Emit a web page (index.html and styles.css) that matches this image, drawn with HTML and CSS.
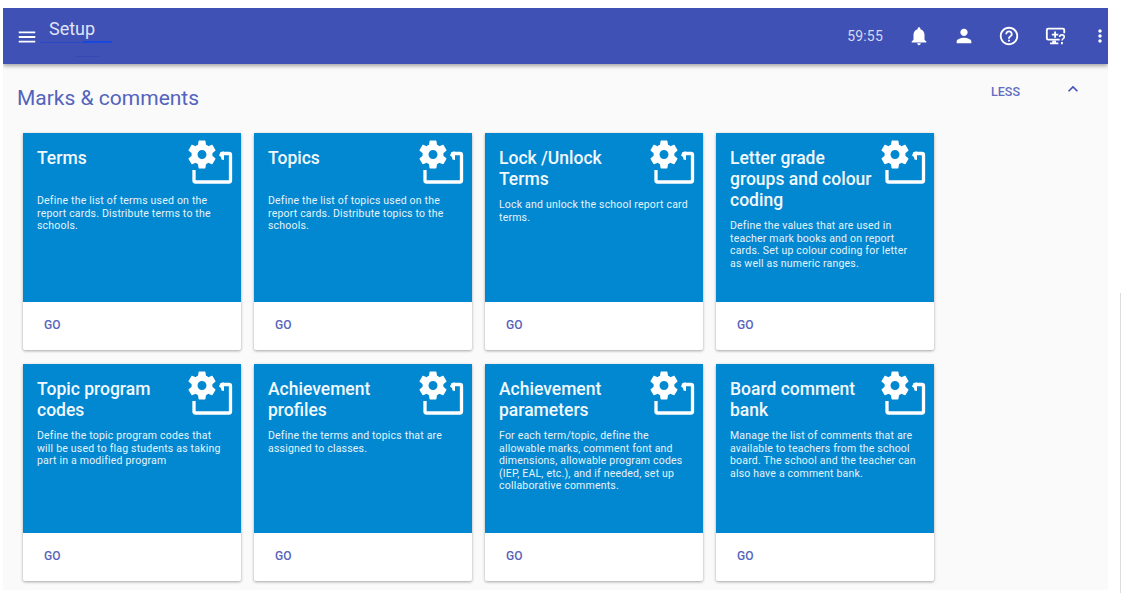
FILE: index.html
```html
<!DOCTYPE html>
<html lang="en">
<head>
<meta charset="utf-8">
<title>Setup</title>
<link rel="stylesheet" href="styles.css">
</head>
<body>
<svg class="defs" width="0" height="0" aria-hidden="true">
  <symbol id="setup" viewBox="0 0 46 46">
    <path fill="#fff" transform="translate(-3.400 -2.900) scale(1.450)" d="M19.140 12.940c.04-.3.06-.61.06-.94 0-.32-.02-.64-.07-.94l2.030-1.580c.18-.14.23-.41.12-.61l-1.920-3.320c-.12-.22-.37-.29-.59-.22l-2.390.96c-.5-.38-1.030-.7-1.620-.94l-.36-2.540c-.04-.24-.24-.41-.48-.41h-3.840c-.24 0-.43.17-.47.41l-.36 2.540c-.59.24-1.130.57-1.620.94l-2.390-.96c-.22-.08-.47 0-.59.22L2.740 8.870c-.12.21-.08.47.12.61l2.030 1.580c-.05.3-.09.63-.09.94s.02.64.07.94l-2.030 1.580c-.18.14-.23.41-.12.61l1.920 3.320c.12.22.37.29.59.22l2.390-.96c.5.38 1.030.7 1.620.94l.36 2.540c.05.24.24.41.48.41h3.840c.24 0 .44-.17.47-.41l.36-2.540c.59-.24 1.130-.56 1.620-.94l2.390.96c.22.08.47 0 .59-.22l1.920-3.320c.12-.22.07-.47-.12-.61l-2.010-1.580zM12 15.100c-1.710 0-3.100-1.390-3.100-3.100s1.390-3.100 3.100-3.100 3.100 1.390 3.100 3.100-1.390 3.100-3.100 3.100z"/>
    <path fill="none" stroke="#fff" stroke-width="3.300" stroke-linejoin="round" d="M6 30v10.500c0 1 .5 1.500 1.500 1.500h33.500c1 0 1.500-.5 1.500-1.500V15c0-1-.5-1.500-1.500-1.500h-7"/>
    <path fill="#fff" d="M36 11.500v8.500l-2.500-.5-.5-2.500-2-1.500 1.500-3.500z"/>
  </symbol>
  <symbol id="menu" viewBox="0 0 24 24"><path fill="currentColor" d="M3 18h18v-2H3zm0-5h18v-2H3zm0-7v2h18V6z"/></symbol>
  <symbol id="bell" viewBox="0 0 24 24"><path fill="currentColor" d="M12 22c1.100 0 2-.9 2-2h-4c0 1.100.9 2 2 2zm6-6v-5c0-3.070-1.630-5.640-4.500-6.320V4c0-.83-.67-1.500-1.500-1.500s-1.500.67-1.500 1.500v.68C7.640 5.360 6 7.920 6 11v5l-2 2v1h16v-1z"/></symbol>
  <symbol id="person" viewBox="0 0 24 24"><path fill="currentColor" d="M12 12c2.210 0 4-1.790 4-4s-1.790-4-4-4-4 1.790-4 4 1.790 4 4 4zm0 2c-2.670 0-8 1.340-8 4v2h16v-2c0-2.660-5.330-4-8-4z"/></symbol>
  <symbol id="help" viewBox="0 0 24 24"><path fill="currentColor" d="M11 18h2v-2h-2zm1-16C6.480 2 2 6.480 2 12s4.480 10 10 10 10-4.480 10-10S17.520 2 12 2zm0 18c-4.410 0-8-3.590-8-8s3.590-8 8-8 8 3.590 8 8-3.590 8-8 8zm0-14c-2.210 0-4 1.790-4 4h2c0-1.100.9-2 2-2s2 .9 2 2c0 2-3 1.750-3 5h2c0-2.250 3-2.500 3-5 0-2.210-1.790-4-4-4z"/></symbol>
  <symbol id="screen" viewBox="0 0 24 24">
    <path fill="none" stroke="currentColor" stroke-width="2" d="M16 16H3.500c-.9 0-1.500-.6-1.500-1.500V5.500C2 4.600 2.600 4 3.500 4h16c.9 0 1.500.6 1.500 1.500V9"/>
    <path fill="currentColor" d="M8 17h4v2h2.500v2h-9v-2H8zM10 7h2v2.500h2.500v2H12V14h-2v-2.500H7.500v-2H10z"/>
    <path fill="none" stroke="currentColor" stroke-width="1.700" d="M16 13c0-3 5-3 5 0 0 2-2.500 2-2.500 4"/>
    <path fill="currentColor" d="M17.500 18.500h2V21h-2z"/>
  </symbol>
  <symbol id="dots" viewBox="0 0 24 24"><path fill="currentColor" d="M12 8c1.100 0 2-.9 2-2s-.9-2-2-2-2 .9-2 2 .9 2 2 2zm0 2c-1.100 0-2 .9-2 2s.9 2 2 2 2-.9 2-2-.9-2-2-2zm0 6c-1.100 0-2 .9-2 2s.9 2 2 2 2-.9 2-2-.9-2-2-2z"/></symbol>
  <symbol id="chev" viewBox="0 0 24 24"><path fill="currentColor" d="M12 8l-6 6 1.410 1.410L12 10.830l4.590 4.580L18 14z"/></symbol>
</svg>
<div class="app">
  <header class="topbar">
    <svg class="ico menu"><use href="#menu"/></svg>
    <span class="title">Setup</span>
    <span class="spacer"></span>
    <span class="time">59:55</span>
    <svg class="ico bell"><use href="#bell"/></svg>
    <svg class="ico person"><use href="#person"/></svg>
    <svg class="ico help"><use href="#help"/></svg>
    <svg class="ico screen"><use href="#screen"/></svg>
    <svg class="ico dots"><use href="#dots"/></svg>
  </header>
  <main class="content">
    <div class="section-head">
      <h1>Marks &amp; comments</h1>
      <span class="less">LESS</span>
      <svg class="chev"><use href="#chev"/></svg>
    </div>
    <div class="grid">
      <article class="card"><div class="card-top"><svg class="setup"><use href="#setup"/></svg><h2>Terms</h2><p>Define the list of terms used on the report cards. Distribute terms to the schools.</p></div><div class="card-foot">GO</div></article>
      <article class="card"><div class="card-top"><svg class="setup"><use href="#setup"/></svg><h2>Topics</h2><p>Define the list of topics used on the report cards. Distribute topics to the schools.</p></div><div class="card-foot">GO</div></article>
      <article class="card"><div class="card-top"><svg class="setup"><use href="#setup"/></svg><h2>Lock /Unlock Terms</h2><p>Lock and unlock the school report card terms.</p></div><div class="card-foot">GO</div></article>
      <article class="card"><div class="card-top"><svg class="setup"><use href="#setup"/></svg><h2>Letter grade groups and colour coding</h2><p>Define the values that are used in teacher mark books and on report cards. Set up colour coding for letter as well as numeric ranges.</p></div><div class="card-foot">GO</div></article>
      <article class="card"><div class="card-top"><svg class="setup"><use href="#setup"/></svg><h2>Topic program codes</h2><p>Define the topic program codes that will be used to flag students as taking part in a modified program</p></div><div class="card-foot">GO</div></article>
      <article class="card"><div class="card-top"><svg class="setup"><use href="#setup"/></svg><h2>Achievement profiles</h2><p>Define the terms and topics that are assigned to classes.</p></div><div class="card-foot">GO</div></article>
      <article class="card"><div class="card-top"><svg class="setup"><use href="#setup"/></svg><h2>Achievement parameters</h2><p>For each term/topic, define the allowable marks, comment font and dimensions, allowable program codes (IEP, EAL, etc.), and if needed, set up collaborative comments.</p></div><div class="card-foot">GO</div></article>
      <article class="card"><div class="card-top"><svg class="setup"><use href="#setup"/></svg><h2>Board comment bank</h2><p>Manage the list of comments that are available to teachers from the school board. The school and the teacher can also have a comment bank.</p></div><div class="card-foot">GO</div></article>
    </div>
  </main>
</div>
</body>
</html>
```
FILE: styles.css
```css
* { box-sizing: border-box; }
html, body { height: 100%; }
body {
  margin: 0;
  padding: 8px 13px 3px 3px;
  background: #fff;
  font-family: Roboto, "Liberation Sans", sans-serif;
  overflow: hidden;
}
body::after {
  content: "";
  position: fixed;
  right: 0;
  top: 293px;
  width: 1px;
  height: 300px;
  background: #dcdcdc;
}
.defs { display: block; height: 0; }
.app {
  height: 582px;
  background: #fafafa;
  overflow: hidden;
}
.topbar {
  height: 56px;
  background: #3f51b5;
  color: #fff;
  display: flex;
  align-items: center;
  box-shadow: 0 2px 4px rgba(0,0,0,.35);
  position: relative;
}
.ico { width: 22px; height: 22px; flex: none; }
.menu { margin-left: 13px; margin-top: 2px; }
.title {
  position: relative;
  margin: -11px 0 0 2px;
  width: 72px;
  height: 25px;
  padding-left: 9px;
  font-size: 18px;
  line-height: 22px;
  color: #dfe3f4;
  border-bottom: 1px solid #2c48c4;
}
.title::before {
  content: "";
  position: absolute;
  left: 43px;
  right: 0;
  bottom: -1px;
  height: 2px;
  background: #1746e0;
}
.title::after {
  content: "";
  position: absolute;
  left: 35px;
  width: 25px;
  top: 38px;
  height: 1px;
  background: #3549b4;
}
.spacer { flex: 1; }
.time { font-size: 14px; letter-spacing: .2px; color: #d5d9ef; margin-right: 25px; }
.bell { margin-right: 23px; }
.person { margin-right: 23px; }
.help { margin-right: 25px; }
.screen { margin-right: 23px; }
.dots { margin-right: -2px; width: 20px; }
.content { padding: 21px 0 0 20px; }
.section-head {
  display: flex;
  align-items: flex-start;
  height: 48px;
}
h1 {
  margin: 0 0 0 -6px;
  flex: 1;
  font-size: 21px;
  font-weight: 400;
  color: #5363bd;
  line-height: 26px;
}
.less { font-size: 12.500px; font-weight: 500; color: #5f6ec0; line-height: 14px; margin: 0 43px 0 0; }
.chev { width: 20px; height: 20px; color: #3f51b5; margin-right: 25px; margin-top: -6px; }
.grid {
  display: grid;
  grid-template-columns: repeat(4, 218px);
  gap: 14px 13px;
}
.card {
  height: 217px;
  background: #fff;
  border-radius: 2px;
  display: flex;
  flex-direction: column;
  box-shadow: 0 1px 3px rgba(0,0,0,.35);
}
.card-top {
  height: 169px;
  background: #0288d1;
  color: #fff;
  padding: 15px 14px 0;
  position: relative;
}
.setup { position: absolute; top: 7px; right: 7px; width: 46px; height: 46px; }
h2 {
  margin: 0;
  min-height: 38px;
  padding-right: 45px;
  font-size: 17.500px;
  font-weight: 500;
  line-height: 21px;
  color: #f2f9fd;
}
p {
  margin: 9px 0 0;
  font-size: 10.500px;
  line-height: 12.500px;
  letter-spacing: .2px;
  color: #e6f3fa;
}
.card-foot {
  flex: 1;
  padding: 16px 21px 0;
  font-size: 12px;
  font-weight: 500;
  color: #5563bb;
}
```
